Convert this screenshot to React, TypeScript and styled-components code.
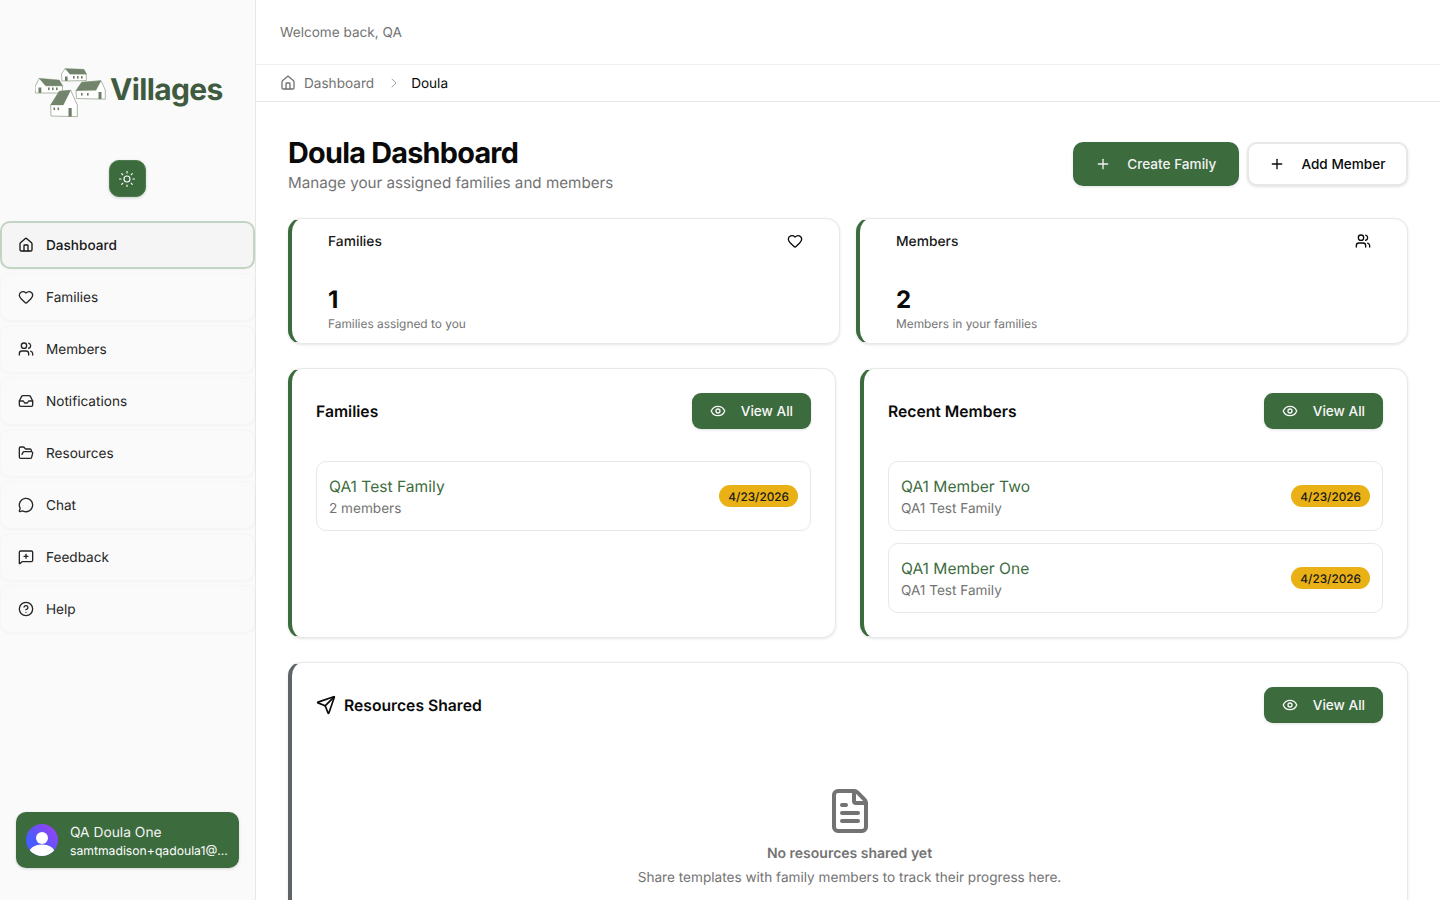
import React from "react";
import styled, { createGlobalStyle } from "styled-components";
import {
  House, Heart, Users, Inbox, FolderOpen, MessageCircle, MessageSquarePlus,
  CircleHelp, Eye, Plus, Send, FileText, Sun, ChevronRight,
} from "lucide-react";

const GREEN = "#3c6b3e";
const MUTED = "#737373";
const INK = "#0a0a0a";
const LINE = "#e8e8e8";

const Global = createGlobalStyle`
  html, body { margin: 0; padding: 0; height: 100%; overflow: hidden; background: #fff; }
  * { box-sizing: border-box; }
  body { font-family: Inter, "Liberation Sans", sans-serif; color: ${INK}; text-rendering: geometricPrecision; }
`;

const Shell = styled.div`display: flex; width: 1440px; height: 900px; overflow: hidden;`;

const Sidebar = styled.aside`
  width: 256px; flex: none; height: 900px; background: #fafafa; border-right: 1px solid ${LINE};
  display: flex; flex-direction: column; padding-bottom: 32px;
`;
const Brand = styled.div`
  height: 160px; display: flex; align-items: flex-start; justify-content: flex-start;
  padding: 68px 0 0 35px; gap: 4px;
`;
const BrandName = styled.span`
  margin-top: 1px; font-size: 30px; font-weight: 700; color: #3f5a3f; letter-spacing: -0.65px; line-height: 42px;
`;
const ThemeRow = styled.div`display: flex; justify-content: center; margin-bottom: 24px; padding-right: 1px;`;
const ThemeButton = styled.button`
  width: 37px; height: 37px; border-radius: 10px; border: 1px solid #4d7a4f; background: ${GREEN}; color: #fff;
  display: flex; align-items: center; justify-content: center; padding: 0;
  box-shadow: 0 1px 3px rgba(0,0,0,.18);
`;
const Nav = styled.nav`display: flex; flex-direction: column; gap: 4px;`;
const NavItem = styled.a<{ $active?: boolean }>`
  height: 48px; display: flex; align-items: center; gap: 12px; padding-left: ${p => (p.$active ? "16px" : "17px")};
  border-radius: 10px; font-size: 13.6px; color: ${p => (p.$active ? "#171717" : "#262626")};
  font-weight: ${p => (p.$active ? 500 : 400)};
  background: ${p => (p.$active ? "#f5f5f5" : "#fafafa")};
  border: ${p => (p.$active ? "2px solid #c3d4c5" : "1px solid #f6f6f6")};
  box-shadow: 0 1px 2px rgba(0,0,0,.03);
`;
const NavLabel = styled.span`padding-top: 2px;`;
const UserCard = styled.div`
  margin: auto 16px 0; height: 56px; border-radius: 10px; background: ${GREEN}; color: #fff;
  display: flex; align-items: center; gap: 12px; padding: 0 10px;
  box-shadow: 0 1px 3px rgba(0,0,0,.15);
`;
const UserText = styled.div`min-width: 0; flex: 1; display: flex; flex-direction: column; padding-top: 1px;`;
const UserName = styled.div`font-size: 13.8px; line-height: 20px; color: #f5f5f5;`;
const UserMail = styled.div`font-size: 12.2px; line-height: 16px; white-space: nowrap;`;

const Main = styled.main`flex: 1; min-width: 0; height: 900px; overflow: hidden; background: #fff;`;
const TopBar = styled.header`
  height: 65px; border-bottom: 1px solid #f0f0f0; display: flex; align-items: center; padding: 2px 0 0 24px;
  font-size: 13.6px; color: ${MUTED};
`;
const Crumbs = styled.div`
  height: 37px; border-bottom: 1px solid ${LINE}; display: flex; align-items: center; padding-left: 24px;
  font-size: 13.6px; color: ${MUTED};
`;
const CrumbLink = styled.span`display: flex; align-items: center; gap: 8px;`;
const CrumbText = styled.span`padding-top: 2px;`;
const CrumbSep = styled.span`display: flex; margin: 0 9px 0 12px; color: #a3a3a3;`;
const CrumbNow = styled.span`padding-top: 2px; color: ${INK};`;

const Page = styled.div`padding: 32px 32px 0; display: flex; flex-direction: column; gap: 24px;`;
const PageHead = styled.div`display: flex; justify-content: space-between; align-items: center;`;
const Title = styled.h1`margin: 0 0 -1px; font-size: 28.8px; line-height: 38px; font-weight: 700; letter-spacing: -0.75px;`;
const Subtitle = styled.p`margin: 0; font-size: 15.2px; line-height: 23px; color: ${MUTED};`;
const Actions = styled.div`display: flex; gap: 8px;`;
const Button = styled.button<{ $outline?: boolean; $small?: boolean }>`
  height: ${p => (p.$small ? "36px" : "44px")}; display: flex; align-items: center; justify-content: center;
  gap: ${p => (p.$small ? "14.5px" : "16px")};
  padding: 0 ${p => (p.$outline ? "20.5px" : p.$small ? "18px" : "22.5px")};
  border-radius: ${p => (p.$small ? "9px" : "10px")};
  font: 500 13.6px Inter, sans-serif;
  color: ${p => (p.$outline ? INK : p.$small ? "#f7f7f7" : "#f2f2f2")};
  background: ${p => (p.$outline ? "#fff" : GREEN)};
  border: ${p => (p.$outline ? "2px solid #e8e8e8" : "none")};
  box-shadow: 0 1px 3px rgba(0,0,0,.12);
`;
const StatRow = styled.div`display: grid; grid-template-columns: 1fr 1fr; gap: 16px;`;
const StatCard = styled.div`
  height: 126px; border: 1px solid ${LINE}; border-left: 4px solid ${GREEN}; border-radius: 14px;
  padding: 12px 36px; background: #fff; box-shadow: 0 1px 3px rgba(0,0,0,.1);
`;
const StatTop = styled.div`display: flex; justify-content: space-between; align-items: center; height: 20px;`;
const StatLabel = styled.span`padding-top: 2px; font-size: 13.8px; font-weight: 500; color: #171717;`;
const StatValue = styled.div`margin-top: 33px; font-size: 24px; line-height: 32px; font-weight: 700;`;
const StatNote = styled.div`font-size: 11.9px; line-height: 16px; color: ${MUTED};`;

const PanelRow = styled.div`display: grid; grid-template-columns: 1fr 1fr; gap: 24px;`;
const Panel = styled.section<{ $gray?: boolean }>`
  min-height: 270px; border: 1px solid ${LINE}; border-left: 4px solid ${p => (p.$gray ? "#5f6468" : GREEN)};
  border-radius: 14px; padding: 24px; background: #fff; box-shadow: 0 1px 3px rgba(0,0,0,.1);
`;
const PanelHead = styled.div`display: flex; align-items: center; justify-content: space-between; margin-bottom: 32px;`;
const PanelTitle = styled.h2`margin: 0; font-size: 15.7px; line-height: 24px; font-weight: 600; display: flex; align-items: center; gap: 8px;`;
const PanelLabel = styled.span`padding-top: 2px;`;
const List = styled.div`display: flex; flex-direction: column; gap: 12px;`;
const Row = styled.div`
  height: 70px; border: 1px solid ${LINE}; border-radius: 10px; padding: 0 12px;
  display: flex; align-items: center; justify-content: space-between;
`;
const RowName = styled.div`font-size: 15.6px; line-height: 24px; padding-top: 1px; margin-bottom: -1px; color: ${GREEN};`;
const RowSub = styled.div`font-size: 13.6px; line-height: 20px; padding-top: 1px; margin-bottom: -1px; color: ${MUTED};`;
const DateBadge = styled.span`
  height: 22px; display: flex; align-items: center; padding: 2px 9px 0; border-radius: 11px;
  background: #eab116; color: #171717; font-size: 11.8px; font-weight: 500;
`;
const Empty = styled.div`display: flex; flex-direction: column; align-items: center; margin-top: 64px; color: ${MUTED};`;
const EmptyTitle = styled.div`margin-top: 9px; font-size: 14px; line-height: 20px; font-weight: 600;`;
const EmptyText = styled.div`margin-top: 4px; font-size: 13.6px; line-height: 20px;`;

const HOUSES = [
  { wall: "26.5,6 30.3,.5 35,6 51.3,6 51.3,12.6 27,13", roof: "30.3,.5 49,1.2 51.5,6 35,6", win: [[38, 8], [42, 8], [46, 8]], door: [30, 8.5, 2.6, 4.4] },
  { wall: "0,18.7 4.3,10.3 10.7,17.7 27.7,17.7 27.2,25 .5,25", roof: "4.3,10.3 24.3,12 27.7,17.7 10.7,17.7", win: [[13, 19.5], [17, 19.5], [21, 19.5]], door: [3.5, 19.5, 2.8, 5.4] },
  { wall: "41,22.7 46.7,14.3 66,12.7 70.3,22 70.3,31.2 41.5,30.5", roof: "46.7,14.3 66,12.7 61,22.3 41,22.7", win: [[46, 25], [52, 25]], door: [63.5, 24, 3, 7] },
  { wall: "15.7,37 24.3,23.3 35.7,22.3 42.3,37 42.3,48.7 16,48", roof: "24.3,23.3 35.7,22.3 28.3,37 15.7,37", win: [[18.5, 39.5], [22.5, 39.5]], door: [33.5, 40, 3.2, 8.6] },
];

const LogoMark = () => (
  <svg width="71" height="50" viewBox="0 0 71 50">
    {HOUSES.map((h, i) => (
      <g key={i}>
        <polygon points={h.wall} fill="#fff" stroke="#8a9a84" strokeWidth=".7" strokeLinejoin="round" />
        <polygon points={h.roof} fill="#72846b" stroke="#72846b" strokeWidth=".3" strokeLinejoin="round" />
        {h.win.map(([x, y], j) => <rect key={j} x={x} y={y} width="1.6" height="2.6" fill="#6d7e67" />)}
        <rect x={h.door[0]} y={h.door[1]} width={h.door[2]} height={h.door[3]} fill="#6d7e67" />
      </g>
    ))}
  </svg>
);

const Avatar = () => (
  <svg width="32" height="32" viewBox="0 0 32 32">
    <defs>
      <linearGradient id="avatarFill" x1="0" y1="1" x2="1" y2="0">
        <stop offset="0.35" stopColor="#4a5cff" />
        <stop offset="1" stopColor="#a63df0" />
      </linearGradient>
      <clipPath id="avatarClip"><circle cx="16" cy="16" r="16" /></clipPath>
    </defs>
    <circle cx="16" cy="16" r="16" fill="url(#avatarFill)" />
    <g clipPath="url(#avatarClip)" fill="#fff">
      <circle cx="16" cy="14" r="6" />
      <ellipse cx="16" cy="28" rx="12.5" ry="7.5" />
    </g>
  </svg>
);

const NAV = [
  { label: "Dashboard", Icon: House, active: true },
  { label: "Families", Icon: Heart },
  { label: "Members", Icon: Users },
  { label: "Notifications", Icon: Inbox },
  { label: "Resources", Icon: FolderOpen },
  { label: "Chat", Icon: MessageCircle },
  { label: "Feedback", Icon: MessageSquarePlus },
  { label: "Help", Icon: CircleHelp },
];

const ViewAll = () => (
  <Button $small><Eye size={16} />View All</Button>
);

const Item = ({ name, sub }: { name: string; sub: string }) => (
  <Row>
    <div>
      <RowName>{name}</RowName>
      <RowSub>{sub}</RowSub>
    </div>
    <DateBadge>4/23/2026</DateBadge>
  </Row>
);

export default function App() {
  return (
    <Shell>
      <Global />
      <Sidebar>
        <Brand>
          <LogoMark />
          <BrandName>Villages</BrandName>
        </Brand>
        <ThemeRow><ThemeButton aria-label="Theme"><Sun size={18} strokeWidth={1.5} /></ThemeButton></ThemeRow>
        <Nav>
          {NAV.map(({ label, Icon, active }) => (
            <NavItem key={label} $active={active}><Icon size={16} /><NavLabel>{label}</NavLabel></NavItem>
          ))}
        </Nav>
        <UserCard>
          <Avatar />
          <UserText>
            <UserName>QA Doula One</UserName>
            <UserMail>samtmadison+qadoula1@...</UserMail>
          </UserText>
        </UserCard>
      </Sidebar>
      <Main>
        <TopBar>Welcome back, QA</TopBar>
        <Crumbs>
          <CrumbLink><House size={16} /><CrumbText>Dashboard</CrumbText></CrumbLink>
          <CrumbSep><ChevronRight size={16} strokeWidth={1.5} /></CrumbSep>
          <CrumbNow>Doula</CrumbNow>
        </Crumbs>
        <Page>
          <PageHead>
            <div>
              <Title>Doula Dashboard</Title>
              <Subtitle>Manage your assigned families and members</Subtitle>
            </div>
            <Actions>
              <Button><Plus size={16} />Create Family</Button>
              <Button $outline><Plus size={16} />Add Member</Button>
            </Actions>
          </PageHead>
          <StatRow>
            <StatCard>
              <StatTop><StatLabel>Families</StatLabel><Heart size={16} /></StatTop>
              <StatValue>1</StatValue>
              <StatNote>Families assigned to you</StatNote>
            </StatCard>
            <StatCard>
              <StatTop><StatLabel>Members</StatLabel><Users size={16} /></StatTop>
              <StatValue>2</StatValue>
              <StatNote>Members in your families</StatNote>
            </StatCard>
          </StatRow>
          <PanelRow>
            <Panel>
              <PanelHead><PanelTitle><PanelLabel>Families</PanelLabel></PanelTitle><ViewAll /></PanelHead>
              <List><Item name="QA1 Test Family" sub="2 members" /></List>
            </Panel>
            <Panel>
              <PanelHead><PanelTitle><PanelLabel>Recent Members</PanelLabel></PanelTitle><ViewAll /></PanelHead>
              <List>
                <Item name="QA1 Member Two" sub="QA1 Test Family" />
                <Item name="QA1 Member One" sub="QA1 Test Family" />
              </List>
            </Panel>
          </PanelRow>
          <Panel $gray>
            <PanelHead><PanelTitle><Send size={20} /><PanelLabel>Resources Shared</PanelLabel></PanelTitle><ViewAll /></PanelHead>
            <Empty>
              <FileText size={48} />
              <EmptyTitle>No resources shared yet</EmptyTitle>
              <EmptyText>Share templates with family members to track their progress here.</EmptyText>
            </Empty>
          </Panel>
        </Page>
      </Main>
    </Shell>
  );
}
